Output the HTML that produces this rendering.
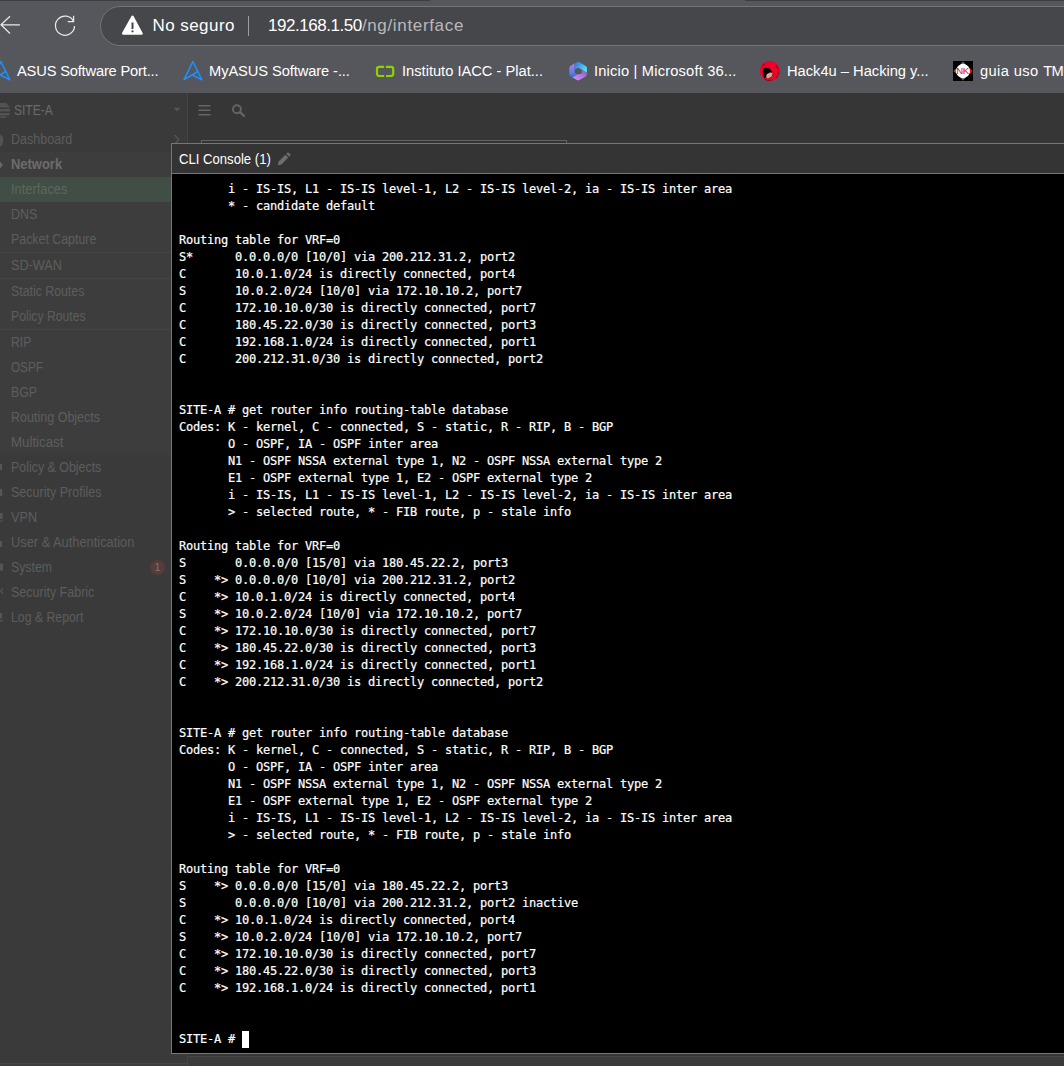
<!DOCTYPE html>
<html lang="es"><head><meta charset="utf-8"><title>CLI Console</title>
<style>
html,body{margin:0;padding:0;}
body{width:1064px;height:1066px;overflow:hidden;position:relative;background:#363636;font-family:"Liberation Sans",sans-serif;}
.abs{position:absolute;}
#chrome{left:0;top:0;width:1064px;height:93px;background:#56575c;}
#topstrip1{left:0;top:0;width:430px;height:1px;background:#3c3d40;}
#topstrip2{left:745px;top:0;width:319px;height:1px;background:#3c3d40;}
#pill{left:100px;top:6px;width:1000px;height:40px;border:1px solid #737478;border-radius:20px;background:#46474b;box-sizing:border-box;}
.url{top:15px;font-size:17px;line-height:22px;color:#fff;white-space:pre;}
.bm{top:60px;font-size:14.7px;line-height:22px;color:#fff;white-space:pre;}
#sidebar{left:0;top:93px;width:187px;height:973px;background:#3a3a3a;}
#submenu{left:0;top:152px;width:187px;height:303px;background:#3d3d3d;}
#sidediv{left:187px;top:93px;width:1px;height:973px;background:#454545;}
.si{position:absolute;font-size:14px;line-height:18px;color:#5d5d5d;white-space:pre;transform-origin:0 50%;}
#hl{left:0;top:177px;width:171px;height:25px;background:#414e45;}
.sep{position:absolute;left:0;width:171px;height:1px;background:#454545;}
#console{left:171px;top:143px;width:900px;height:911px;border:1px solid #767676;background:#000;box-sizing:border-box;}
#chead{left:0;top:0;width:900px;height:29px;background:#343434;border-bottom:1px solid #767676;}
#ctitle{left:7.2px;top:6px;font-size:14.3px;line-height:18px;color:#fff;white-space:pre;transform:scaleX(0.917);transform-origin:0 50%;}
#term{left:7px;top:37px;margin:0;font-family:"DejaVu Sans Mono","Liberation Mono",monospace;font-size:12px;letter-spacing:-0.2247px;line-height:17px;color:#fff;-webkit-text-stroke:0.2px #fff;white-space:pre;}
#cursor{left:70px;top:887px;width:7px;height:17px;background:#fff;}
</style></head><body>
<div id="chrome" class="abs"></div>
<div id="topstrip1" class="abs"></div><div id="topstrip2" class="abs"></div>
<div id="pill" class="abs"></div>
<!-- back arrow -->
<svg class="abs" style="left:0;top:14px" width="22" height="22" viewBox="0 14 22 22"><path d="M19.9 24.8H0.8M10 16.3L1 24.8L10 33.5" fill="none" stroke="#e9e9ea" stroke-width="1.25"/></svg>
<!-- reload -->
<svg class="abs" style="left:52px;top:13px" width="26" height="26" viewBox="52 13 26 26"><path d="M73.6 21.5A9.55 9.55 0 1 0 74.55 26" fill="none" stroke="#e9e9ea" stroke-width="1.25"/><path d="M73.6 15.8V21.5H67.7" fill="none" stroke="#e9e9ea" stroke-width="1.25"/></svg>
<!-- warning -->
<svg class="abs" style="left:120px;top:13px" width="26" height="24" viewBox="120 13 26 24"><path d="M132.5 16.8L141.5 33.5H123.3Z" fill="#fff" stroke="#fff" stroke-width="2.6" stroke-linejoin="round"/><rect x="131.5" y="22.5" width="2" height="6.5" fill="#46474b"/><circle cx="132.5" cy="31.3" r="1.15" fill="#46474b"/></svg>
<div class="abs url" style="left:152.4px;letter-spacing:0.46px">No seguro</div>
<div class="abs" style="left:248px;top:16px;width:1px;height:20px;background:#9d9ea1"></div>
<div class="abs url" style="left:268px;letter-spacing:-0.45px">192.168.1.50<span style="color:#b9b9bb;letter-spacing:0.66px">/ng/interface</span></div>

<!-- bookmarks -->
<svg class="abs" style="left:-10px;top:60px" width="22" height="22" viewBox="0 0 22 22"><path d="M2.1 19.6L10.9 1.5L19.9 19.75L10.9 15.2M2.1 19.6L15.4 11.7" fill="none" stroke="#1e8fff" stroke-width="1.6" stroke-linejoin="round" stroke-linecap="round"/></svg>
<div class="abs bm" style="left:17px;letter-spacing:-0.19px">ASUS Software Port...</div>
<svg class="abs" style="left:182px;top:60px" width="22" height="22" viewBox="0 0 22 22"><path d="M2.1 19.6L10.9 1.5L19.9 19.75L10.9 15.2M2.1 19.6L15.4 11.7" fill="none" stroke="#1e8fff" stroke-width="1.6" stroke-linejoin="round" stroke-linecap="round"/></svg>
<div class="abs bm" style="left:209px;letter-spacing:-0.1px">MyASUS Software -...</div>
<svg class="abs" style="left:374px;top:64px" width="22" height="15" viewBox="374 64 22 15"><path d="M384.2 66.8H379.2a2.2 2.2 0 0 0-2.2 2.2v4.8a2.2 2.2 0 0 0 2.2 2.2h5M386 66.8h5a2.2 2.2 0 0 1 2.2 2.2v4.8a2.2 2.2 0 0 1-2.2 2.2h-5" fill="none" stroke="#8ed200" stroke-width="2.2"/></svg>
<div class="abs bm" style="left:402px;letter-spacing:-0.01px">Instituto IACC - Plat...</div>
<svg class="abs" style="left:568px;top:60px" width="20" height="22" viewBox="0 0 20 22">
<defs>
<linearGradient id="g1" x1="0" y1="0" x2="0" y2="1"><stop offset="0" stop-color="#b57cf0"/><stop offset="0.6" stop-color="#6a7fe8"/><stop offset="1" stop-color="#1f74d8"/></linearGradient>
<linearGradient id="g2" x1="0" y1="0" x2="1" y2="0.6"><stop offset="0" stop-color="#2f6fd8"/><stop offset="0.5" stop-color="#4aa3ec"/><stop offset="1" stop-color="#4fe3f5"/></linearGradient>
<linearGradient id="g3" x1="0" y1="1" x2="1" y2="0"><stop offset="0" stop-color="#e08cf5"/><stop offset="0.5" stop-color="#b07ce0"/><stop offset="1" stop-color="#8a55b8"/></linearGradient>
</defs>
<path d="M7 3.2L2.6 5.8Q1.3 6.6 1.3 8V14.2Q1.3 15.6 2.6 16.4L4.5 17.5L9.3 14.6L7.2 13.2Q6.6 12.8 6.6 12V4.2Z" fill="url(#g1)"/>
<path d="M6.6 4.2V9.6L9 8.2Q10.2 7.6 11.4 8.3L18.9 12.8V8Q18.9 6.6 17.7 5.9L11.4 2.2Q10.2 1.5 9 2.2L7 3.2Z" fill="url(#g2)"/>
<path d="M4.5 17.5L9 20.1Q10.2 20.8 11.4 20.1L17.7 16.4Q18.9 15.6 18.9 14.2V12.8L13.8 9.8V12.6Q13.8 13.4 13.1 13.8L9.3 14.6Z" fill="url(#g3)"/>
</svg>
<div class="abs bm" style="left:594px;letter-spacing:0.17px">Inicio | Microsoft 36...</div>
<svg class="abs" style="left:759px;top:60px" width="22" height="22" viewBox="0 0 22 22"><circle cx="11" cy="10.9" r="10" fill="#f3002a"/><circle cx="11" cy="10.9" r="9.6" fill="none" stroke="#c8104a" stroke-width="0.8"/><path d="M4 8.2Q7 7.2 10 8.3Q12.3 9.6 13 11.8L11 14L8 16L5.5 18.5Q3.6 15.8 3.9 11Z" fill="#050203"/><ellipse cx="10.6" cy="15.6" rx="3.4" ry="2.7" fill="#e3a48d" transform="rotate(-25 10.6 15.6)"/><path d="M9.5 18.6Q13.3 18.2 14.2 14.2" fill="none" stroke="#3a0a10" stroke-width="0.9"/><path d="M16.8 5.2L19.6 9.4M5.6 3.6L3 6.4M19.8 11.5L17.5 18" stroke="#6a0014" stroke-width="0.9" fill="none"/><path d="M5.5 19.2L9 20.6L12.5 20.2" stroke="#8a0018" stroke-width="0.9" fill="none"/></svg>
<div class="abs bm" style="left:787px;letter-spacing:-0.01px">Hack4u – Hacking y...</div>
<svg class="abs" style="left:953px;top:61px" width="20" height="20" viewBox="0 0 20 20"><rect width="20" height="20" fill="#000"/><path d="M10 1.2L18.8 10L10 18.8L1.2 10Z" fill="#fff"/><circle cx="10" cy="10" r="6.9" fill="#fff"/><path d="M10 0.3L12.2 2.8H7.8ZM10 19.7L12.2 17.2H7.8ZM0.3 10L2.8 7.8V12.2Z" fill="#555"/><path d="M19.7 10L16.9 7V13Z" fill="#e10613"/><text x="9.4" y="13.4" font-size="9.6" text-anchor="middle" fill="#e10613" font-family="Liberation Sans, sans-serif" letter-spacing="-0.6">NK</text></svg>
<div class="abs bm" style="left:980px;letter-spacing:0.39px">guia uso <span style="letter-spacing:-0.7px">TMUX</span></div>

<!-- page -->
<div id="sidebar" class="abs"></div>
<div id="submenu" class="abs"></div>
<div id="sidediv" class="abs"></div>
<div id="hl" class="abs"></div>
<svg class="abs" style="left:0;top:101px" width="11" height="18" viewBox="0 0 11 18"><path d="M0 2h6l3.5 3.5v1H0zM0 8h10v2.5H0zM0 12h10l-1 2.5H0zM0 15.5h7l-1.5 1.5H0z" fill="#535353"/></svg>
<div class="si" style="left:13.8px;top:101.0px;transform:scaleX(0.8597);color:#6a6a6a;">SITE-A</div>
<div class="si" style="left:10.5px;top:130.0px;transform:scaleX(0.8955);">Dashboard</div>
<div class="si" style="left:10.5px;top:154.6px;transform:scaleX(0.9250);font-weight:bold;color:#6c6c6c;">Network</div>
<div class="si" style="left:10.5px;top:179.6px;transform:scaleX(0.9170);color:#5b675f;">Interfaces</div>
<div class="si" style="left:10.5px;top:204.6px;transform:scaleX(0.8909);">DNS</div>
<div class="si" style="left:10.5px;top:230.0px;transform:scaleX(0.8842);">Packet Capture</div>
<div class="si" style="left:10.5px;top:256.0px;transform:scaleX(0.9038);">SD-WAN</div>
<div class="si" style="left:10.5px;top:282.0px;transform:scaleX(0.8805);">Static Routes</div>
<div class="si" style="left:10.5px;top:307.0px;transform:scaleX(0.8717);">Policy Routes</div>
<div class="si" style="left:10.5px;top:332.5px;transform:scaleX(0.8700);">RIP</div>
<div class="si" style="left:10.5px;top:358.0px;transform:scaleX(0.8356);">OSPF</div>
<div class="si" style="left:10.5px;top:383.0px;transform:scaleX(0.8796);">BGP</div>
<div class="si" style="left:10.5px;top:408.0px;transform:scaleX(0.8944);">Routing Objects</div>
<div class="si" style="left:10.5px;top:433.0px;transform:scaleX(0.9492);">Multicast</div>
<div class="si" style="left:10.5px;top:458.0px;transform:scaleX(0.8861);">Policy &amp; Objects</div>
<div class="si" style="left:10.5px;top:483.0px;transform:scaleX(0.8950);">Security Profiles</div>
<div class="si" style="left:10.5px;top:508.0px;transform:scaleX(0.9158);">VPN</div>
<div class="si" style="left:10.5px;top:533.0px;transform:scaleX(0.9163);">User &amp; Authentication</div>
<div class="si" style="left:10.5px;top:558.0px;transform:scaleX(0.8785);">System</div>
<div class="si" style="left:10.5px;top:583.0px;transform:scaleX(0.8927);">Security Fabric</div>
<div class="si" style="left:10.5px;top:608.0px;transform:scaleX(0.8765);">Log &amp; Report</div>

<div class="sep" style="top:252px"></div><div class="sep" style="top:278px"></div><div class="sep" style="top:329px"></div>
<!-- left-edge partial icons -->
<svg class="abs" style="left:0;top:130px" width="5" height="500" viewBox="0 130 5 500" fill="#555">
<path d="M0 134.5a3.3 6 0 0 1 0 12z" fill="#525252"/>
<path d="M0 161.5L3 165L0 168.5z" fill="#666"/>
<rect x="0" y="464" width="2" height="6"/><rect x="0" y="489" width="2.2" height="7"/>
<rect x="0" y="513" width="2.6" height="6"/><rect x="0" y="520.5" width="3" height="1.2"/>
<rect x="0" y="541" width="2" height="6"/>
<rect x="0" y="563.5" width="3" height="7"/>
<path d="M3 588.5L0.5 591L3 593.5" fill="none" stroke="#555" stroke-width="1.2"/>
<rect x="0" y="613" width="2" height="5.5"/><rect x="0" y="620" width="3" height="1.3"/>
</svg>
<!-- badge -->
<div class="abs" style="left:150px;top:560px;width:15px;height:15px;border-radius:8px;background:#573c3c;color:#787878;font-size:11px;line-height:15px;text-align:center">1</div>
<!-- header icons -->
<svg class="abs" style="left:197px;top:102px" width="15" height="16" viewBox="197 102 15 16"><path d="M198.4 105.7h12.1M198.4 110.2h12.1M198.4 114.7h12.1" stroke="#646464" stroke-width="1.6"/></svg>
<svg class="abs" style="left:230px;top:101px" width="18" height="18" viewBox="230 101 18 18"><circle cx="236.9" cy="109.3" r="4" fill="none" stroke="#646464" stroke-width="1.9"/><path d="M240.2 112.4L244 116" stroke="#646464" stroke-width="2.3" stroke-linecap="round"/></svg>
<svg class="abs" style="left:173px;top:107px" width="8" height="5" viewBox="0 0 8 5"><path d="M0.5 0.8h7L4 4.6Z" fill="#565656"/></svg>
<svg class="abs" style="left:172px;top:133px" width="9" height="13" viewBox="172 133 9 13"><path d="M174.6 135L178.8 139.6L174.6 144.2" fill="none" stroke="#555" stroke-width="1.5"/></svg>
<div class="abs" style="left:201px;top:140px;width:366px;height:10px;border:1px solid #646464;box-sizing:border-box;background:#333"></div>
<div class="abs" style="left:188px;top:1056px;width:876px;height:10px;background:#3a3a3a;border-top:1px solid #474747;box-sizing:border-box"></div>
<div class="abs" style="left:0;top:1063px;width:187px;height:3px;background:#3d3d3d;border-top:1px solid #464646;box-sizing:border-box"></div>

<!-- console -->
<div id="console" class="abs">
 <div id="chead" class="abs"></div>
 <div id="ctitle" class="abs">CLI Console (1)</div>
 <svg class="abs" style="left:105px;top:8px" width="14" height="14" viewBox="0 0 15 15"><path d="M0.8 14.2l0.9-4L9 2.9l3.1 3.1L4.8 13.3zM9.9 2L11 0.9a1.1 1.1 0 0 1 1.6 0l1.5 1.5a1.1 1.1 0 0 1 0 1.6L13 5.1z" fill="#6e6e6e"/></svg>
 <pre id="term" class="abs">       i - IS-IS, L1 - IS-IS level-1, L2 - IS-IS level-2, ia - IS-IS inter area
       * - candidate default

Routing table for VRF=0
S*      0.0.0.0/0 [10/0] via 200.212.31.2, port2
C       10.0.1.0/24 is directly connected, port4
S       10.0.2.0/24 [10/0] via 172.10.10.2, port7
C       172.10.10.0/30 is directly connected, port7
C       180.45.22.0/30 is directly connected, port3
C       192.168.1.0/24 is directly connected, port1
C       200.212.31.0/30 is directly connected, port2


SITE-A # get router info routing-table database
Codes: K - kernel, C - connected, S - static, R - RIP, B - BGP
       O - OSPF, IA - OSPF inter area
       N1 - OSPF NSSA external type 1, N2 - OSPF NSSA external type 2
       E1 - OSPF external type 1, E2 - OSPF external type 2
       i - IS-IS, L1 - IS-IS level-1, L2 - IS-IS level-2, ia - IS-IS inter area
       &gt; - selected route, * - FIB route, p - stale info

Routing table for VRF=0
S       0.0.0.0/0 [15/0] via 180.45.22.2, port3
S    *&gt; 0.0.0.0/0 [10/0] via 200.212.31.2, port2
C    *&gt; 10.0.1.0/24 is directly connected, port4
S    *&gt; 10.0.2.0/24 [10/0] via 172.10.10.2, port7
C    *&gt; 172.10.10.0/30 is directly connected, port7
C    *&gt; 180.45.22.0/30 is directly connected, port3
C    *&gt; 192.168.1.0/24 is directly connected, port1
C    *&gt; 200.212.31.0/30 is directly connected, port2


SITE-A # get router info routing-table database
Codes: K - kernel, C - connected, S - static, R - RIP, B - BGP
       O - OSPF, IA - OSPF inter area
       N1 - OSPF NSSA external type 1, N2 - OSPF NSSA external type 2
       E1 - OSPF external type 1, E2 - OSPF external type 2
       i - IS-IS, L1 - IS-IS level-1, L2 - IS-IS level-2, ia - IS-IS inter area
       &gt; - selected route, * - FIB route, p - stale info

Routing table for VRF=0
S    *&gt; 0.0.0.0/0 [15/0] via 180.45.22.2, port3
S       0.0.0.0/0 [10/0] via 200.212.31.2, port2 inactive
C    *&gt; 10.0.1.0/24 is directly connected, port4
S    *&gt; 10.0.2.0/24 [10/0] via 172.10.10.2, port7
C    *&gt; 172.10.10.0/30 is directly connected, port7
C    *&gt; 180.45.22.0/30 is directly connected, port3
C    *&gt; 192.168.1.0/24 is directly connected, port1


SITE-A # </pre>
 <div id="cursor" class="abs"></div>
</div>
</body></html>
